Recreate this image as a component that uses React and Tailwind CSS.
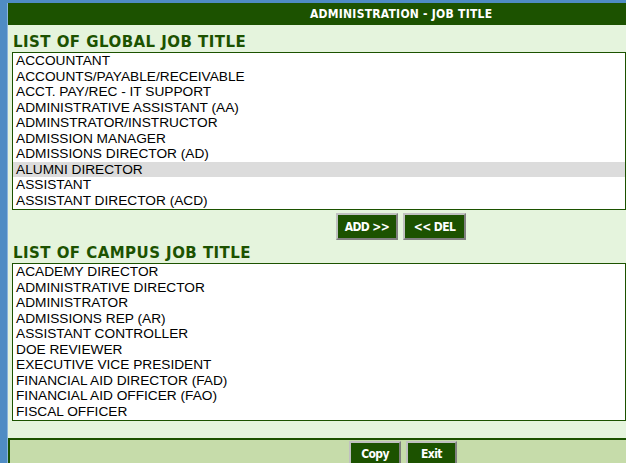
import React from "react";

const globalTitles = [
  "ACCOUNTANT",
  "ACCOUNTS/PAYABLE/RECEIVABLE",
  "ACCT. PAY/REC - IT SUPPORT",
  "ADMINISTRATIVE ASSISTANT (AA)",
  "ADMINSTRATOR/INSTRUCTOR",
  "ADMISSION MANAGER",
  "ADMISSIONS DIRECTOR (AD)",
  "ALUMNI DIRECTOR",
  "ASSISTANT",
  "ASSISTANT DIRECTOR (ACD)",
];

const campusTitles = [
  "ACADEMY DIRECTOR",
  "ADMINISTRATIVE DIRECTOR",
  "ADMINISTRATOR",
  "ADMISSIONS REP (AR)",
  "ASSISTANT CONTROLLER",
  "DOE REVIEWER",
  "EXECUTIVE VICE PRESIDENT",
  "FINANCIAL AID DIRECTOR (FAD)",
  "FINANCIAL AID OFFICER (FAO)",
  "FISCAL OFFICER",
];

const ListBox = ({ items, selected }) => (
  <div className="ml-[4px] h-[158px] border border-[#1c5200] bg-white overflow-hidden font-['Liberation_Sans',sans-serif] text-[13.7px] leading-[15.5px] text-black">
    {items.map((item) => (
      <div
        key={item}
        className={`pl-[3px] h-[15.5px] whitespace-nowrap ${item === selected ? "bg-[#dcdcdc]" : ""}`}
      >
        {item}
      </div>
    ))}
  </div>
);

const GreenButton = ({ children, className = "" }) => (
  <button
    className={`bg-[#1c5200] text-white font-bold text-[12px] tracking-[-0.6px] font-['DejaVu_Sans_Condensed',sans-serif] border-2 border-t-[#c0c0c0] border-l-[#c0c0c0] border-r-[#808080] border-b-[#808080] ${className}`}
  >
    {children}
  </button>
);

const App = () => {
  return (
    <div className="w-[626px] h-[463px] overflow-hidden bg-[#4f8cc4] pt-[3px] flex">
      <div className="w-[8px] shrink-0 border-r border-[#8db5dc]" />
      <div className="flex-1 flex flex-col">
        <div className="h-[22px] shrink-0 bg-[#1c5200] text-white font-bold text-[12px] tracking-[0.25px] font-['DejaVu_Sans_Condensed',sans-serif] flex items-center pl-[302px]">
          ADMINISTRATION - JOB TITLE
        </div>

        <div className="bg-[#e5f4dd] flex-1 flex flex-col pt-[7px]">
          <h2 className="pl-[5px] h-[20px] text-[15px] font-bold tracking-[0.45px] text-[#1c5200] font-['DejaVu_Sans',sans-serif] leading-[20px] whitespace-nowrap">
            LIST OF GLOBAL JOB TITLE
          </h2>
          <ListBox items={globalTitles} selected="ALUMNI DIRECTOR" />

          <div className="flex gap-[5px] pl-[328px] pt-[3px] h-[33px]">
            <GreenButton className="w-[62px] h-[27px]">ADD &gt;&gt;</GreenButton>
            <GreenButton className="w-[63px] h-[27px]">&lt;&lt; DEL</GreenButton>
          </div>

          <h2 className="pl-[5px] h-[20px] text-[15px] font-bold tracking-[0.45px] text-[#1c5200] font-['DejaVu_Sans',sans-serif] leading-[20px] whitespace-nowrap">
            LIST OF CAMPUS JOB TITLE
          </h2>
          <ListBox items={campusTitles} />
          <div className="flex-1" />
        </div>

        <div className="h-[25px] shrink-0 bg-[#c6dcaa] border-t-2 border-l-2 border-[#1c5200] flex gap-[5px] pl-[339px] pt-[1px]">
          <GreenButton className="w-[52px] h-[26px]">Copy</GreenButton>
          <GreenButton className="w-[51px] h-[26px]">Exit</GreenButton>
        </div>
      </div>
    </div>
  );
};

export default App;
